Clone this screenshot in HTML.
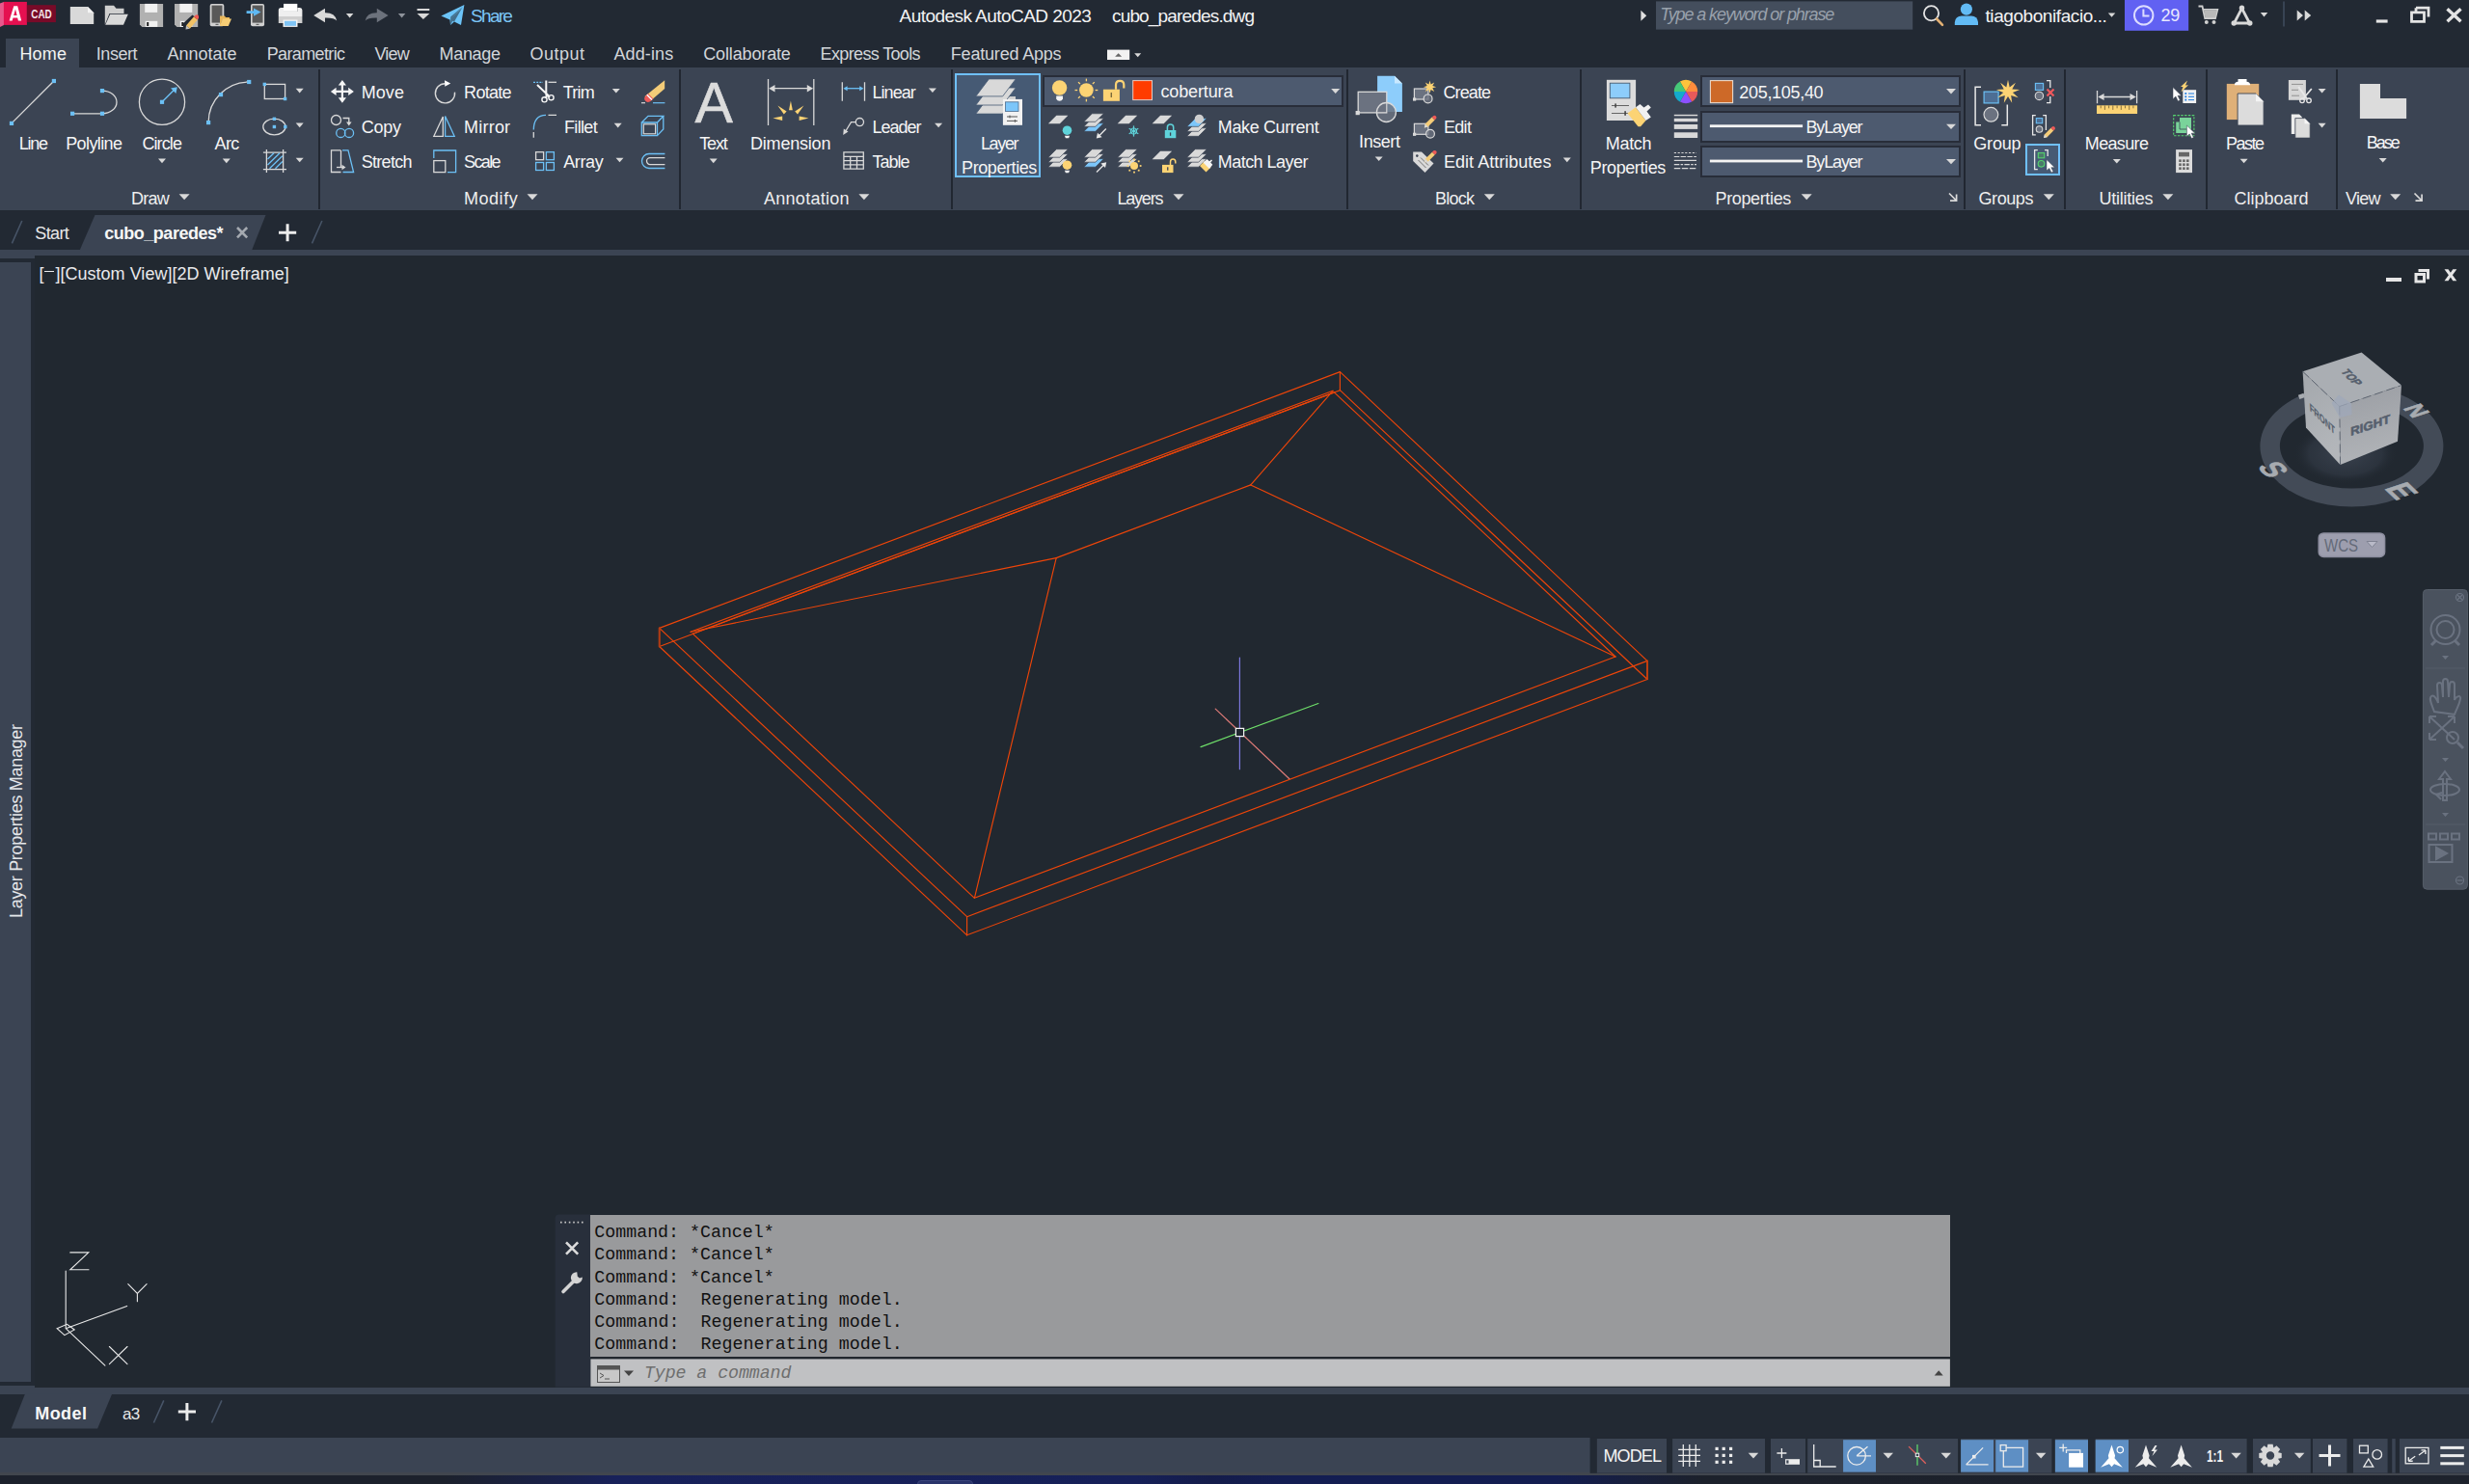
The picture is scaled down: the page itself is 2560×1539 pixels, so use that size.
<!DOCTYPE html>
<html><head><meta charset="utf-8"><title>Autodesk AutoCAD 2023 - cubo_paredes.dwg</title>
<style>
html,body{margin:0;padding:0;background:#222933;}
body{width:2560px;height:1539px;position:relative;overflow:hidden;font-family:"Liberation Sans",sans-serif;}
.b{position:absolute;box-sizing:border-box;}
.t{position:absolute;white-space:pre;line-height:1;}
.ov{position:absolute;left:0;top:0;pointer-events:none;}
</style></head><body>

<div id="app">
<div class="b" style="left:0.0px;top:0.0px;width:2560.0px;height:35.0px;background:#222933;"></div>
<div class="b" style="left:0.0px;top:35.0px;width:2560.0px;height:35.0px;background:#222933;"></div>
<div class="b" style="left:6.0px;top:40.0px;width:76.0px;height:30.0px;background:#3b4453;"></div>
<div class="b" style="left:0.0px;top:69.7px;width:2560.0px;height:148.3px;background:#3b4453;"></div>
<div class="b" style="left:0.0px;top:218.0px;width:2560.0px;height:41.0px;background:#222933;"></div>
<div class="b" style="left:0.0px;top:258.9px;width:2560.0px;height:6.0px;background:#3b4453;"></div>
<div class="b" style="left:36.0px;top:264.9px;width:2524.0px;height:1174.5px;background:#212830;"></div>
<div class="b" style="left:0.0px;top:264.9px;width:36.0px;height:1175.0px;background:#222933;"></div>
<div class="b" style="left:0.0px;top:258.9px;width:36.0px;height:9.1px;background:#3b4453;"></div>
<div class="b" style="left:0.0px;top:272.0px;width:32.4px;height:1160.5px;background:#3b4453;"></div>
<div class="b" style="left:0.0px;top:1436.8px;width:36.0px;height:9.0px;background:#3b4453;"></div>
<div class="b" style="left:0.0px;top:1439.4px;width:2560.0px;height:6.3px;background:#3b4453;"></div>
<div class="b" style="left:0.0px;top:1445.7px;width:2560.0px;height:45.0px;background:#222933;"></div>
<div class="b" style="left:0.0px;top:1490.6px;width:2560.0px;height:36.6px;background:#3b4453;"></div>
<div class="b" style="left:0.0px;top:1527.2px;width:2560.0px;height:2.4px;background:#41464e;"></div>
<div class="b" style="left:0.0px;top:1529.6px;width:2560.0px;height:9.4px;background:linear-gradient(90deg,#1c212c 0%,#1c212c 18%,#18215a 25%,#162058 46%,#141c4a 49%,#131d52 52%,#131d50 63%,#1c212b 69%,#1d222c 100%);"></div>
<div class="b" style="left:951.0px;top:1534.8px;width:58.0px;height:6.0px;background:#29336a;border:1px solid #3a447a;border-radius:4px 4px 0 0;"></div>
</div>
<svg class="ov" width="2560" height="1539" viewBox="0 0 2560 1539">
<path d="M0 3.5L4 1.9V25.9L0 27.9Z" fill="#e8588c"/>
<rect x="3.9" y="1.9" width="24" height="24" fill="#e51050"/>
<rect x="27.9" y="5.2" width="30" height="17.9" fill="#780a28"/>
<path d="M9.6 21.5L14.3 6.3H18.2L22.2 21.5H18.9L18.2 18.6H13.5L12.7 21.5ZM14.2 16H17.6L16 9.6Z" fill="#fff"/>
<text x="32.3" y="19" font-family="Liberation Sans" font-weight="bold" font-size="12.5" fill="#f4e6ea" textLength="21.5" lengthAdjust="spacingAndGlyphs">CAD</text>
<path d="M72.8 7.1H91L97.2 13.3V25H72.8Z" fill="#d9d9d9"/><path d="M91 7.1V13.3H97.2Z" fill="#f4f4f4"/>
<path d="M108.8 5.8H118L120.5 8.8H128.5V14H113.5L108.8 25.5Z" fill="#cfcfcf"/><path d="M114.2 14.8H132.8L128 25.7H109.2Z" fill="#d9d9d9"/>
<path d="M144.9 3.9H169.1V27.9H147.4L144.9 25.4Z" fill="#b1b1b1"/>
<rect x="150.20000000000002" y="3.9" width="13" height="9" fill="#f1f1f1"/>
<rect x="150.70000000000002" y="21.8" width="12.6" height="6.1" fill="#f1f1f1"/><rect x="152.20000000000002" y="23" width="2" height="4" fill="#222"/>
<path d="M181.0 3.9H205.2V27.9H183.5L181.0 25.4Z" fill="#b1b1b1"/>
<rect x="186.3" y="3.9" width="13" height="9" fill="#f1f1f1"/>
<rect x="186.8" y="21.8" width="12.6" height="6.1" fill="#f1f1f1"/><rect x="188.3" y="23" width="2" height="4" fill="#222"/>
<path d="M190 24L199.5 15.5L204.5 19.5L195 28.5H190Z" fill="#222933"/>
<path d="M193 26.5L201 17.2L204.8 20.4L196.8 29.7Z" fill="#f2c266"/><path d="M201 17.2L203 15.6Q205 14.8 206 16.8L206 18.5L204.8 20.4Z" fill="#ee5a54"/><path d="M193 26.5L196.8 29.7L192.5 30.5Z" fill="#c0c0c0"/>
<rect x="217.7" y="3.9" width="14.6" height="23.3" rx="2" fill="#d0d0d0"/><rect x="219.5" y="5.6" width="11" height="18" fill="#595959"/><rect x="223.5" y="24.8" width="3" height="1.2" fill="#666"/>
<path d="M228 16.6H233L234 18H238V20H231L228 27Z" fill="#e9b75a"/><path d="M231 19.4H240L236.8 27H228Z" fill="#f7cd75"/>
<rect x="260" y="3.9" width="14.1" height="23.3" rx="2" fill="#d0d0d0"/><rect x="261.6" y="5.6" width="10.9" height="18" fill="#595959"/><rect x="265.5" y="24.8" width="3" height="1.2" fill="#666"/>
<path d="M255.6 11.2H263V8.4L270.5 12.5L263 16.8V14H255.6Z" fill="#5fb9f3"/>
<rect x="294" y="3.9" width="14.3" height="8" fill="#fff"/><path d="M288.8 10.5Q288.8 8 291.3 8H294V12H308.3V8H311Q313.4 8 313.4 10.5V17H288.8Z" fill="#efefef"/><rect x="288.8" y="17" width="24.6" height="7" fill="#cfcfcf"/><rect x="293.5" y="20.5" width="15" height="7.4" fill="#f4f4f4"/><rect x="295" y="21.8" width="12" height="5" fill="#7fc4f5"/>
<path d="M325.2 16L337 8.8V13.2Q347.5 13 349.2 21.5Q346.5 18.3 337 18.6V23.3Z" fill="#d9d9d9"/>
<path d="M402.6 16L390.8 8.8V13.2Q380.3 13 378.7 21.5Q381.5 18.3 390.8 18.6V23.3Z" fill="#6c727c"/>
<path d="M358.9 14.0h7.5l-3.8 4.4z" fill="#d9d9d9"/>
<path d="M412.9 14.0h7.5l-3.8 4.4z" fill="#8e939b"/>
<rect x="432.5" y="9" width="12.8" height="2" fill="#d9d9d9"/>
<path d="M432.5 14.0h12.8l-6.4 6z" fill="#d9d9d9"/>
<path d="M457.4 16.4L481.4 4.9L478 25.9L471 22.5L467 26L466.5 20.5Z" fill="#6cc4f8"/><path d="M466.5 20.5L480.5 6.2L467.2 17.6L467 26L469.3 21.8L471 22.5L479.2 8Z" fill="#222933" opacity="0.55"/>
<path d="M1701.4 10.8L1707.2 16.3L1701.4 21.8Z" fill="#e0e0e0"/>
<rect x="1717" y="1.4" width="266.2" height="29.2" fill="#444e5d"/>
<circle cx="2002.5" cy="13.8" r="7.6" fill="none" stroke="#e4e4e4" stroke-width="1.8"/><path d="M2008 19.5L2014 25.8" stroke="#e2b074" stroke-width="2.6" stroke-linecap="round"/>
<circle cx="2038.9" cy="9.6" r="6.1" fill="#62bbf5"/><path d="M2026.8 26V23Q2027.5 16.5 2034 16.5H2044Q2050.3 16.5 2051 23V26Z" fill="#62bbf5"/>
<path d="M2185.8 13.4h7.5l-3.8 4.4z" fill="#d9d9d9"/>
<rect x="2203" y="0" width="66.2" height="31.8" fill="#6161f2"/>
<circle cx="2222.7" cy="15.9" r="9.7" fill="none" stroke="#dcdcff" stroke-width="2"/><path d="M2222.4 9.5V16.6H2228.5" stroke="#dcdcff" stroke-width="2" fill="none"/>
<path d="M2279.5 6.5H2283.5L2286.2 19H2297L2299.3 9.8H2285" stroke="#cfcfcf" stroke-width="1.8" fill="none"/><path d="M2285 10.5H2298.8L2297 18.3H2286.6Z" fill="#b9b9b9"/><circle cx="2287.8" cy="23" r="2" fill="#cfcfcf"/><circle cx="2295.5" cy="23" r="2" fill="#cfcfcf"/>
<path d="M2324.5 8.6L2316.5 24H2332.5Z" fill="none" stroke="#d9d9d9" stroke-width="2.8" stroke-linejoin="round"/><circle cx="2324.5" cy="8.3" r="2.7" fill="#d9d9d9"/><circle cx="2316.2" cy="24" r="2.7" fill="#d9d9d9"/><circle cx="2332.8" cy="24" r="2.7" fill="#d9d9d9"/>
<path d="M2343.8 13.0h7.5l-3.8 4.4z" fill="#d9d9d9"/>
<rect x="2367.2" y="1.5" width="1.6" height="26" fill="#3f4a5c"/>
<path d="M2381.7 10.5L2388 16L2381.7 21.5ZM2389.7 10.5L2396.2 16L2389.7 21.5Z" fill="#d9d9d9"/>
<rect x="2463.8" y="20.4" width="11.8" height="3.2" fill="#e4e4e4"/>
<path d="M2505 8.2H2518V17.5M2500.5 12.8H2513.5V22.4H2500.5Z" fill="none" stroke="#e4e4e4" stroke-width="2.8"/><path d="M2505 8.2V12" stroke="#e4e4e4" stroke-width="2.8"/>
<path d="M2537.5 9.2L2551.5 22.2M2551.5 9.2L2537.5 22.2" stroke="#e4e4e4" stroke-width="3.4"/>
</svg>
<span class="t" style="left:488.1px;top:7.0px;font-size:19px;color:#7cc6f6;letter-spacing:-1.725px;">Share</span>
<span class="t" style="left:932.5px;top:6.6px;font-size:19px;color:#f3f3f3;letter-spacing:-0.545px;">Autodesk AutoCAD 2023</span>
<span class="t" style="left:1153.0px;top:6.6px;font-size:19px;color:#f3f3f3;letter-spacing:-0.837px;">cubo_paredes.dwg</span>
<span class="t" style="left:1721.2px;top:6.4px;font-size:18px;color:#99a1ac;letter-spacing:-1.112px;font-style:italic;">Type a keyword or phrase</span>
<span class="t" style="left:2058.5px;top:6.7px;font-size:19px;color:#f3f3f3;letter-spacing:-0.424px;">tiagobonifacio...</span>
<span class="t" style="left:2240.6px;top:7.4px;font-size:18px;color:#e8e8ff;letter-spacing:-0.423px;">29</span>
<span class="t" style="left:20.4px;top:46.7px;font-size:18px;color:#f4f4f4;letter-spacing:0.161px;">Home</span>
<span class="t" style="left:99.8px;top:46.7px;font-size:18px;color:#d3d6da;letter-spacing:-0.444px;">Insert</span>
<span class="t" style="left:173.5px;top:46.7px;font-size:18px;color:#d3d6da;letter-spacing:-0.010px;">Annotate</span>
<span class="t" style="left:276.7px;top:46.7px;font-size:18px;color:#d3d6da;letter-spacing:-0.625px;">Parametric</span>
<span class="t" style="left:388.4px;top:46.7px;font-size:18px;color:#d3d6da;letter-spacing:-0.798px;">View</span>
<span class="t" style="left:455.6px;top:46.7px;font-size:18px;color:#d3d6da;letter-spacing:-0.351px;">Manage</span>
<span class="t" style="left:549.5px;top:46.7px;font-size:18px;color:#d3d6da;letter-spacing:0.472px;">Output</span>
<span class="t" style="left:636.5px;top:46.7px;font-size:18px;color:#d3d6da;letter-spacing:0.111px;">Add-ins</span>
<span class="t" style="left:729.2px;top:46.7px;font-size:18px;color:#d3d6da;letter-spacing:-0.137px;">Collaborate</span>
<span class="t" style="left:850.6px;top:46.7px;font-size:18px;color:#d3d6da;letter-spacing:-0.644px;">Express Tools</span>
<span class="t" style="left:985.8px;top:46.7px;font-size:18px;color:#d3d6da;letter-spacing:-0.191px;">Featured Apps</span>
<span class="t" style="left:136.0px;top:196.8px;font-size:18px;color:#eeeeee;letter-spacing:-0.735px;">Draw</span>
<span class="t" style="left:481.0px;top:196.8px;font-size:18px;color:#eeeeee;letter-spacing:0.536px;">Modify</span>
<span class="t" style="left:792.0px;top:196.8px;font-size:18px;color:#eeeeee;letter-spacing:0.280px;">Annotation</span>
<span class="t" style="left:1158.5px;top:196.8px;font-size:18px;color:#eeeeee;letter-spacing:-1.226px;">Layers</span>
<span class="t" style="left:1487.9px;top:196.8px;font-size:18px;color:#eeeeee;letter-spacing:-0.729px;">Block</span>
<span class="t" style="left:1778.5px;top:196.8px;font-size:18px;color:#eeeeee;letter-spacing:-0.360px;">Properties</span>
<span class="t" style="left:2051.5px;top:196.8px;font-size:18px;color:#eeeeee;letter-spacing:-0.426px;">Groups</span>
<span class="t" style="left:2176.5px;top:196.8px;font-size:18px;color:#eeeeee;letter-spacing:-0.252px;">Utilities</span>
<span class="t" style="left:2316.4px;top:196.8px;font-size:18px;color:#eeeeee;letter-spacing:0.006px;">Clipboard</span>
<span class="t" style="left:2432.0px;top:196.8px;font-size:18px;color:#eeeeee;letter-spacing:-0.764px;">View</span>
<svg class="ov" width="2560" height="1539" viewBox="0 0 2560 1539">
<path d="M185.6 201.2h11l-5.5 6z" fill="#d9d9d9"/>
<path d="M546.5 201.2h11l-5.5 6z" fill="#d9d9d9"/>
<path d="M890.4 201.2h11l-5.5 6z" fill="#d9d9d9"/>
<path d="M1216.5 201.2h11l-5.5 6z" fill="#d9d9d9"/>
<path d="M1538.8 201.2h11l-5.5 6z" fill="#d9d9d9"/>
<path d="M1867.7 201.2h11l-5.5 6z" fill="#d9d9d9"/>
<path d="M2118.8 201.2h11l-5.5 6z" fill="#d9d9d9"/>
<path d="M2242.4 201.2h11l-5.5 6z" fill="#d9d9d9"/>
<path d="M2478.2 201.2h11l-5.5 6z" fill="#d9d9d9"/>
<path d="M2021 200.5L2028 207.5M2028.6 201.5V208.2H2022" stroke="#d9d9d9" stroke-width="1.7" fill="none"/>
<path d="M2503.5 200.5L2510.5 207.5M2511.1 201.5V208.2H2504.5" stroke="#d9d9d9" stroke-width="1.7" fill="none"/>
<rect x="330" y="72" width="2" height="145" fill="#212731"/>
<rect x="704" y="72" width="2" height="145" fill="#212731"/>
<rect x="986" y="72" width="2" height="145" fill="#212731"/>
<rect x="1396" y="72" width="2" height="145" fill="#212731"/>
<rect x="1638" y="72" width="2" height="145" fill="#212731"/>
<rect x="2036" y="72" width="2" height="145" fill="#212731"/>
<rect x="2140" y="72" width="2" height="145" fill="#212731"/>
<rect x="2287" y="72" width="2" height="145" fill="#212731"/>
<rect x="2422" y="72" width="2" height="145" fill="#212731"/>
<rect x="1148" y="51.6" width="23.2" height="10.4" fill="#f2f2f2"/>
<path d="M1156.1 58.8h7l-3.5-3.6z" fill="#666"/>
<path d="M1176.2 55.3h7l-3.5 4z" fill="#d9d9d9"/>
<g stroke="#d9d9d9" stroke-width="1.3" fill="none">
<path d="M12 127.9L55.9 84"/>
<path d="M75.1 117.8H106A15 11.85 0 0 0 106 94.1"/>
<circle cx="168" cy="105.8" r="23.6"/>
<path d="M216.1 127.1A42.1 42.1 0 0 1 258.2 85"/>
<rect x="274.3" y="87.4" width="21.3" height="15.1"/>
<ellipse cx="284.4" cy="131.5" rx="11.6" ry="8.3"/>
<path d="M276.4 155.1V178.9M293.6 155.1V178.9M272.9 158.2H297M272.9 175.6H297"/>
</g>
<path d="M168 105.8L181 92.8" stroke="#6cc0f5" stroke-width="1.4"/><path d="M183.8 90.2L177 91.6L182.4 97Z" fill="#6cc0f5"/>
<path d="M277.5 165L284 158.8M277.5 171L290 158.8M279.5 174.8L292.8 161.8M285.5 174.8L292.8 167.5" stroke="#6cc0f5" stroke-width="1.3"/>
<rect x="9.9" y="125.8" width="4.2" height="4.2" fill="#6cc0f5"/>
<rect x="53.8" y="81.9" width="4.2" height="4.2" fill="#6cc0f5"/>
<rect x="73.0" y="115.7" width="4.2" height="4.2" fill="#6cc0f5"/>
<rect x="103.9" y="115.7" width="4.2" height="4.2" fill="#6cc0f5"/>
<rect x="103.9" y="92.0" width="4.2" height="4.2" fill="#6cc0f5"/>
<rect x="165.9" y="103.7" width="4.2" height="4.2" fill="#6cc0f5"/>
<rect x="214.0" y="125.0" width="4.2" height="4.2" fill="#6cc0f5"/>
<rect x="226.9" y="96.0" width="4.2" height="4.2" fill="#6cc0f5"/>
<rect x="256.1" y="82.9" width="4.2" height="4.2" fill="#6cc0f5"/>
<rect x="272.6" y="85.7" width="3.4" height="3.4" fill="#6cc0f5"/>
<rect x="293.9" y="100.8" width="3.4" height="3.4" fill="#6cc0f5"/>
<rect x="282.7" y="121.6" width="3.4" height="3.4" fill="#6cc0f5"/>
<rect x="282.7" y="129.8" width="3.4" height="3.4" fill="#6cc0f5"/>
<rect x="294.1" y="129.8" width="3.4" height="3.4" fill="#6cc0f5"/>
<path d="M306.7 91.8h8l-4.0 4.6z" fill="#d9d9d9"/>
<path d="M306.7 127.6h8l-4.0 4.6z" fill="#d9d9d9"/>
<path d="M306.7 163.7h8l-4.0 4.6z" fill="#d9d9d9"/>
<path d="M164.0 164.6h8l-4.0 4.6z" fill="#d9d9d9"/>
<path d="M230.8 164.6h8l-4.0 4.6z" fill="#d9d9d9"/>
<path d="M354.9 83L359 88.6H356V93.8H361.2V90.8L366.9 94.9L361.2 99V96H356V101.2H359L354.9 106.8L350.8 101.2H353.8V96H348.6V99L342.9 94.9L348.6 90.8V93.8H353.8V88.6H350.8Z" fill="#f6f6f6"/>
<circle cx="348.5" cy="124.5" r="5" fill="none" stroke="#d9d9d9" stroke-width="1.3"/><path d="M355.5 122.5H361.8V127" stroke="#d9d9d9" stroke-width="1.3" fill="none"/><path d="M359 126.5H364.6L361.8 130.5Z" fill="#d9d9d9"/>
<circle cx="353.3" cy="137.9" r="4.6" fill="none" stroke="#6cc0f5" stroke-width="1.3"/><circle cx="362" cy="137.9" r="4.6" fill="none" stroke="#6cc0f5" stroke-width="1.3"/>
<path d="M353.5 155.9H343.5V178.5H353.5M353.5 155.9V173" stroke="#d9d9d9" stroke-width="1.3" fill="none"/><path d="M349 173.5H355" stroke="#d9d9d9" stroke-width="1.3"/><path d="M354.5 170.8L358.5 173.5L354.5 176.2Z" fill="#d9d9d9"/><path d="M355 155.9H361L366.6 178.5H355.5" stroke="#6cc0f5" stroke-width="1.3" fill="none"/>
<path d="M461.4 86.7A10.1 10.1 0 1 0 471.5 95.6" stroke="#d9d9d9" stroke-width="1.4" fill="none"/><path d="M461 83.2L467.2 86.5L461.3 89.8Z" fill="#fff"/>
<path d="M459.3 121V141.3H449.8Z" stroke="#d9d9d9" stroke-width="1.3" fill="none"/><path d="M461.6 120.5V141.3H471.2Z" stroke="#6cc0f5" stroke-width="1.3" fill="none"/>
<path d="M449.8 164V156H472.6V178.6H464" stroke="#6cc0f5" stroke-width="1.3" fill="none"/><rect x="449.8" y="166.6" width="12" height="12" stroke="#d9d9d9" stroke-width="1.3" fill="none"/>
<path d="M553 85.3H563" stroke="#6cc0f5" stroke-width="1.3" stroke-dasharray="2 1.2"/><path d="M568.5 85.3H577" stroke="#d9d9d9" stroke-width="1.3"/>
<path d="M566.3 83.5V98L570 101M557 88L568 98.5L565 101.5" stroke="#f6f6f6" stroke-width="2" fill="none"/><circle cx="564.5" cy="103.3" r="2.6" stroke="#f6f6f6" stroke-width="1.4" fill="none"/><circle cx="571.5" cy="101.2" r="2.6" stroke="#f6f6f6" stroke-width="1.4" fill="none"/>
<path d="M553.3 134.5Q553.5 119.6 566 119.4" stroke="#6cc0f5" stroke-width="1.3" fill="none"/><path d="M568.5 119.4H577M553.3 137V142.7" stroke="#d9d9d9" stroke-width="1.3"/>
<rect x="555.6" y="157.7" width="8" height="8" stroke="#d9d9d9" stroke-width="1.3" fill="none"/>
<rect x="566.4" y="157.7" width="8" height="8" stroke="#6cc0f5" stroke-width="1.3" fill="none"/>
<rect x="555.6" y="168.5" width="8" height="8" stroke="#6cc0f5" stroke-width="1.3" fill="none"/>
<rect x="566.4" y="168.5" width="8" height="8" stroke="#6cc0f5" stroke-width="1.3" fill="none"/>
<path d="M689.2 83.2V92L674 105L668.5 100Z" fill="#f4cc78"/><path d="M672 97L677.5 102.5L674.5 105Q671 107 669 104.5Q667 102 669.5 99.5Z" fill="#ee5a58"/><path d="M670.8 98.3L676 103.6" stroke="#fff" stroke-width="1.4"/>
<path d="M665 106.7H669" stroke="#d9d9d9" stroke-width="1.2"/><path d="M677 106.7H689.4" stroke="#6cc0f5" stroke-width="1.2"/>
<path d="M665.3 127H681.5V140.6H665.3ZM665.3 127L672 120.3H687.8L681.5 127M687.8 120.3V134L681.5 140.6" stroke="#6cc0f5" stroke-width="1.3" fill="none"/><rect x="667.3" y="128.8" width="12.3" height="10" stroke="#d9d9d9" stroke-width="1.2" fill="none"/>
<path d="M689.4 159.5H673A7.5 7.5 0 0 0 673 174.5H689.4" stroke="#6cc0f5" stroke-width="1.3" fill="none"/><path d="M689.4 163.6H674A3.5 3.5 0 0 0 674 170.6H689.4" stroke="#d9d9d9" stroke-width="1.3" fill="none"/>
<path d="M634.8 91.9h8l-4.0 4.6z" fill="#d9d9d9"/>
<path d="M636.7 127.8h8l-4.0 4.6z" fill="#d9d9d9"/>
<path d="M638.5 163.7h8l-4.0 4.6z" fill="#d9d9d9"/>
<path d="M796.5 82V130M843.8 82V130M801 91.7H839" stroke="#d9d9d9" stroke-width="1.3" fill="none"/><path d="M797.2 91.7L803.5 88V95.4ZM843.1 91.7L836.8 88V95.4Z" fill="#d9d9d9"/>
<g fill="#fcd374"><path d="M819.9 104.6L821.8 114.2H818Z"/><path d="M806.4 109.6L815.6 115.6L812.8 118.4Z"/><path d="M833.4 109.6L824.2 115.6L827 118.4Z"/><path d="M801.4 122.6L811.2 120.4V124.9Z"/><path d="M838.4 122.6L828.6 120.4V124.9Z"/></g>
<path d="M873.3 85.2V104.7M896.5 85.2V104.7" stroke="#d9d9d9" stroke-width="1.3"/><path d="M877 91.7H893" stroke="#6cc0f5" stroke-width="1.3"/><path d="M874.4 91.7L878.6 89.2V94.2ZM895.4 91.7L891.2 89.2V94.2Z" fill="#6cc0f5"/>
<circle cx="891.4" cy="126.6" r="4.1" stroke="#d9d9d9" stroke-width="1.3" fill="none"/><path d="M887.2 126.6H882.5L876.5 136.5" stroke="#d9d9d9" stroke-width="1.3" fill="none"/><path d="M874.2 140L874.8 133.5L879.5 136.6Z" fill="#d9d9d9"/>
<path d="M874.9 157.9H895.3V175.2H874.9ZM874.9 162.3H895.3M874.9 166.6H895.3M874.9 170.9H895.3M881.7 162.3V175.2M888.5 162.3V175.2" stroke="#d9d9d9" stroke-width="1.3" fill="none"/>
<path d="M735.7 164.6h8l-4.0 4.6z" fill="#d9d9d9"/>
<path d="M962.9 91.4h8l-4.0 4.6z" fill="#d9d9d9"/>
<path d="M969.1 127.7h8l-4.0 4.6z" fill="#d9d9d9"/>
</svg>
<span class="t" style="left:19.8px;top:139.7px;font-size:18px;color:#f5f5f5;letter-spacing:-1.245px;">Line</span>
<span class="t" style="left:68.2px;top:139.7px;font-size:18px;color:#f5f5f5;letter-spacing:-0.606px;">Polyline</span>
<span class="t" style="left:147.4px;top:139.7px;font-size:18px;color:#f5f5f5;letter-spacing:-0.901px;">Circle</span>
<span class="t" style="left:222.5px;top:139.7px;font-size:18px;color:#f5f5f5;letter-spacing:-0.600px;">Arc</span>
<span class="t" style="left:374.7px;top:86.8px;font-size:18px;color:#f5f5f5;letter-spacing:0.061px;">Move</span>
<span class="t" style="left:374.7px;top:122.8px;font-size:18px;color:#f5f5f5;letter-spacing:-0.274px;">Copy</span>
<span class="t" style="left:374.7px;top:158.8px;font-size:18px;color:#f5f5f5;letter-spacing:-0.705px;">Stretch</span>
<span class="t" style="left:481.1px;top:86.8px;font-size:18px;color:#f5f5f5;letter-spacing:-0.708px;">Rotate</span>
<span class="t" style="left:481.1px;top:122.8px;font-size:18px;color:#f5f5f5;letter-spacing:0.202px;">Mirror</span>
<span class="t" style="left:481.1px;top:158.8px;font-size:18px;color:#f5f5f5;letter-spacing:-1.632px;">Scale</span>
<span class="t" style="left:583.8px;top:86.8px;font-size:18px;color:#f5f5f5;letter-spacing:-0.805px;">Trim</span>
<span class="t" style="left:585.0px;top:122.8px;font-size:18px;color:#f5f5f5;letter-spacing:-0.662px;">Fillet</span>
<span class="t" style="left:584.2px;top:158.8px;font-size:18px;color:#f5f5f5;letter-spacing:-0.376px;">Array</span>
<span class="t" style="left:720.6px;top:77.6px;font-size:59px;color:#dcdcdc;-webkit-text-stroke:0.6px #dcdcdc;">A</span>
<span class="t" style="left:725.3px;top:139.8px;font-size:18px;color:#f5f5f5;letter-spacing:-1.172px;">Text</span>
<span class="t" style="left:778.0px;top:139.8px;font-size:18px;color:#f5f5f5;letter-spacing:-0.205px;">Dimension</span>
<span class="t" style="left:904.5px;top:86.8px;font-size:18px;color:#f5f5f5;letter-spacing:-0.948px;">Linear</span>
<span class="t" style="left:904.5px;top:122.8px;font-size:18px;color:#f5f5f5;letter-spacing:-1.011px;">Leader</span>
<span class="t" style="left:904.5px;top:158.8px;font-size:18px;color:#f5f5f5;letter-spacing:-0.984px;">Table</span>
<div class="b" style="left:990.0px;top:76.0px;width:89.2px;height:108.0px;background:#465a74;border:2px solid #6fc0fb;"></div>
<div class="b" style="left:1081.0px;top:78.0px;width:312.0px;height:32.6px;background:#4d5a6f;border:2px solid #282d39;"></div>
<div class="b" style="left:1763.0px;top:78.0px;width:270.0px;height:33.4px;background:#4d5a6f;border:2px solid #282d39;"></div>
<div class="b" style="left:1763.0px;top:115.0px;width:270.0px;height:33.3px;background:#4d5a6f;border:2px solid #282d39;"></div>
<div class="b" style="left:1763.0px;top:151.0px;width:270.0px;height:33.0px;background:#4d5a6f;border:2px solid #282d39;"></div>
<div class="b" style="left:2100.0px;top:149.0px;width:36.0px;height:33.0px;background:#465a74;border:2px solid #6fc0fb;"></div>
<svg class="ov" width="2560" height="1539" viewBox="0 0 2560 1539">
<path d="M1025.4 100.1H1053.2L1039.6 118.1H1011.8Z" fill="#d9d9d9" stroke="#465a74" stroke-width="0.8"/>
<path d="M1025.4 91H1053.2L1039.6 109H1011.8Z" fill="#d9d9d9" stroke="#465a74" stroke-width="0.8"/>
<path d="M1025.4 81.9H1053.2L1039.6 99.9H1011.8Z" fill="#d9d9d9" stroke="#465a74" stroke-width="0.8"/>
<rect x="1047" y="100" width="6" height="3" fill="#cfcfcf"/>
<rect x="1039.9" y="102.9" width="20.1" height="26.9" fill="#f2f2f2"/><rect x="1042.4" y="105.8" width="13.6" height="9.6" fill="#7cc6fa" stroke="#4d6c8c" stroke-width="0.8"/>
<path d="M1044 121H1055M1044 125.4H1055M1047 119.6V122.4M1052.4 124V126.8" stroke="#555" stroke-width="1"/>
<circle cx="1098.6" cy="91" r="7.7" fill="#fcd374"/><path d="M1095.2 99.5H1102V102.5Q1101 104.8 1098.6 104.8Q1096.2 104.8 1095.2 102.5Z" fill="#f4f4f4"/>
<circle cx="1126.4" cy="93.5" r="7.3" fill="#fcd374"/>
<path d="M1135.6 93.5L1138.3 93.5" stroke="#fcd374" stroke-width="1.3"/>
<path d="M1132.9 100.0L1134.8 101.9" stroke="#fcd374" stroke-width="1.3"/>
<path d="M1126.4 102.7L1126.4 105.4" stroke="#fcd374" stroke-width="1.3"/>
<path d="M1119.9 100.0L1118.0 101.9" stroke="#fcd374" stroke-width="1.3"/>
<path d="M1117.2 93.5L1114.5 93.5" stroke="#fcd374" stroke-width="1.3"/>
<path d="M1119.9 87.0L1118.0 85.1" stroke="#fcd374" stroke-width="1.3"/>
<path d="M1126.4 84.3L1126.4 81.6" stroke="#fcd374" stroke-width="1.3"/>
<path d="M1132.9 87.0L1134.8 85.1" stroke="#fcd374" stroke-width="1.3"/>
<rect x="1143.9" y="92.7" width="17" height="12.1" fill="#fcd374"/><path d="M1157 92.7V88Q1157 83.8 1161.2 83.8Q1165.3 83.8 1165.3 88V91.5" stroke="#fcd374" stroke-width="2.2" fill="none"/><rect x="1151.6" y="96" width="1.4" height="5" fill="#7a6a3a"/>
<rect x="1174.7" y="83.6" width="19.8" height="20" fill="#ff3c00" stroke="#e6c9c0" stroke-width="1"/>
<path d="M1380.2 92.1h9l-4.5 5z" fill="#d9d9d9"/>
<path d="M1095.4 119.8H1107.4L1098.9 128.3H1086.9Z" fill="#d9d9d9"/>
<circle cx="1106.5" cy="135.2" r="4.8" fill="#5fd3da"/><path d="M1103.9 140.79999999999998H1109.1L1108.1 143.2H1104.9Z" fill="#f4f4f4"/>
<path d="M1132.4 127.8H1144.4L1135.9 136.3H1123.9Z" fill="#7cc6fa" stroke="#3b4453" stroke-width="0.7"/>
<path d="M1132.4 122.8H1144.4L1135.9 131.3H1123.9Z" fill="#d9d9d9" stroke="#3b4453" stroke-width="0.7"/>
<path d="M1132.4 117.8H1144.4L1135.9 126.3H1123.9Z" fill="#d9d9d9" stroke="#3b4453" stroke-width="0.7"/>
<path d="M1146.8 133.5L1139 141.5" stroke="#e8e8e8" stroke-width="1.3"/><path d="M1136.8 143.5L1138 137.8L1142.6 142.3Z" fill="#e8e8e8"/>
<path d="M1167.2 119.8H1179.2L1170.7 128.3H1158.7Z" fill="#d9d9d9"/>
<path d="M1180.3 138.8L1170.7 133.2" stroke="#5fd3da" stroke-width="1.2"/>
<path d="M1175.5 141.6L1175.5 130.4" stroke="#5fd3da" stroke-width="1.2"/>
<path d="M1170.7 138.8L1180.3 133.2" stroke="#5fd3da" stroke-width="1.2"/>
<circle cx="1175.5" cy="136" r="3.2" stroke="#5fd3da" stroke-width="1" fill="none"/>
<path d="M1203.1 119.8H1215.1L1206.6 128.3H1194.6Z" fill="#d9d9d9"/>
<rect x="1207.8" y="135" width="11.5" height="8.2" fill="#5fd3da"/><rect x="1212.8999999999999" y="137.4" width="1.3" height="3.4" fill="#3b4453"/>
<path d="M1210.3999999999999 135V132Q1210.3999999999999 129 1213.55 129Q1216.7 129 1216.7 132V135" stroke="#5fd3da" stroke-width="1.5" fill="none"/>
<path d="M1239.2 132.8H1251.2L1242.7 141.3H1230.7Z" fill="#d9d9d9" stroke="#3b4453" stroke-width="0.7"/>
<path d="M1239.2 127.8H1251.2L1242.7 136.3H1230.7Z" fill="#d9d9d9" stroke="#3b4453" stroke-width="0.7"/>
<path d="M1239.2 122.8H1251.2L1242.7 131.3H1230.7Z" fill="#7cc6fa" stroke="#3b4453" stroke-width="0.7"/>
<circle cx="1243.4" cy="123.4" r="4.7" fill="#cfcfcf"/>
<path d="M1095.4 164.7H1107.4L1098.9 173.2H1086.9Z" fill="#d9d9d9" stroke="#3b4453" stroke-width="0.7"/>
<path d="M1095.4 159.7H1107.4L1098.9 168.2H1086.9Z" fill="#d9d9d9" stroke="#3b4453" stroke-width="0.7"/>
<path d="M1095.4 154.7H1107.4L1098.9 163.2H1086.9Z" fill="#d9d9d9" stroke="#3b4453" stroke-width="0.7"/>
<circle cx="1106.5" cy="171.2" r="4.8" fill="#fcd374"/><path d="M1103.9 176.79999999999998H1109.1L1108.1 179.2H1104.9Z" fill="#f4f4f4"/>
<path d="M1132.4 164.7H1144.4L1135.9 173.2H1123.9Z" fill="#7cc6fa" stroke="#3b4453" stroke-width="0.7"/>
<path d="M1132.4 159.7H1144.4L1135.9 168.2H1123.9Z" fill="#d9d9d9" stroke="#3b4453" stroke-width="0.7"/>
<path d="M1132.4 154.7H1144.4L1135.9 163.2H1123.9Z" fill="#d9d9d9" stroke="#3b4453" stroke-width="0.7"/>
<path d="M1137 178.5L1145 170.5" stroke="#e8e8e8" stroke-width="1.3"/><path d="M1147.2 168.3L1146 174L1141.4 169.5Z" fill="#e8e8e8"/>
<path d="M1167.2 164.7H1179.2L1170.7 173.2H1158.7Z" fill="#d9d9d9" stroke="#3b4453" stroke-width="0.7"/>
<path d="M1167.2 159.7H1179.2L1170.7 168.2H1158.7Z" fill="#d9d9d9" stroke="#3b4453" stroke-width="0.7"/>
<path d="M1167.2 154.7H1179.2L1170.7 163.2H1158.7Z" fill="#d9d9d9" stroke="#3b4453" stroke-width="0.7"/>
<circle cx="1176" cy="172" r="4" fill="#fcd374"/>
<rect x="1181.7" y="171.1" width="1.8" height="1.8" fill="#fcd374"/>
<rect x="1179.8" y="175.8" width="1.8" height="1.8" fill="#fcd374"/>
<rect x="1175.1" y="177.7" width="1.8" height="1.8" fill="#fcd374"/>
<rect x="1170.4" y="175.8" width="1.8" height="1.8" fill="#fcd374"/>
<rect x="1168.5" y="171.1" width="1.8" height="1.8" fill="#fcd374"/>
<rect x="1170.4" y="166.4" width="1.8" height="1.8" fill="#fcd374"/>
<rect x="1175.1" y="164.5" width="1.8" height="1.8" fill="#fcd374"/>
<rect x="1179.8" y="166.4" width="1.8" height="1.8" fill="#fcd374"/>
<path d="M1203.1 156.7H1215.1L1206.6 165.2H1194.6Z" fill="#d9d9d9"/>
<rect x="1205" y="170.9" width="11.5" height="8.2" fill="#fcd374"/><rect x="1210.1" y="173.3" width="1.3" height="3.4" fill="#3b4453"/>
<path d="M1213.5 170.9V167.9Q1213.5 164.9 1216.2 164.9Q1218.8 164.9 1218.8 167.9V169.4" stroke="#fcd374" stroke-width="1.5" fill="none"/>
<path d="M1239.2 164.7H1251.2L1242.7 173.2H1230.7Z" fill="#d9d9d9" stroke="#3b4453" stroke-width="0.7"/>
<path d="M1239.2 159.7H1251.2L1242.7 168.2H1230.7Z" fill="#d9d9d9" stroke="#3b4453" stroke-width="0.7"/>
<path d="M1239.2 154.7H1251.2L1242.7 163.2H1230.7Z" fill="#d9d9d9" stroke="#3b4453" stroke-width="0.7"/>
<path d="M1244 172L1249 167L1255.5 173.5L1250.5 178.5Z" fill="#fcd374"/><path d="M1247.5 168.5L1251.5 165L1254 167.3L1256 165.5L1257 166.5L1255.2 168.5L1257.3 170.8L1254 175Z" fill="#f4f4f4"/>
<path d="M1428.1 78.8H1446L1453.9 86.5V116H1428.1Z" fill="#8dcdfb"/><path d="M1446 78.8V86.5H1453.9Z" fill="#c8e8ff"/>
<rect x="1408.2" y="95.3" width="29.6" height="21.6" fill="#6b7280" stroke="#d9d9d9" stroke-width="1.3"/><circle cx="1437.4" cy="116.5" r="10" fill="#6b7280" fill-opacity="0.85" stroke="#d9d9d9" stroke-width="1.3"/><path d="M1427.4 116.9H1437.8V106.5" stroke="#d9d9d9" stroke-width="1.1" fill="none"/><rect x="1405.6" y="115" width="4.2" height="4.2" fill="#d9d9d9"/>
<rect x="1466.4" y="92.0" width="14.5" height="11" fill="#6b7280" stroke="#d9d9d9" stroke-width="1.2"/><rect x="1465" y="101.39999999999999" width="3.2" height="3.2" fill="#d9d9d9"/>
<circle cx="1480.6" cy="102.39999999999999" r="4.4" fill="#6b7280" fill-opacity="0.8" stroke="#d9d9d9" stroke-width="1.2"/>
<path d="M1482.5 83.6L1483.6 87.4L1487.2 85.5L1485.3 89.1L1489.1 90.2L1485.3 91.3L1487.2 94.9L1483.6 93.0L1482.5 96.8L1481.4 93.0L1477.8 94.9L1479.7 91.3L1475.9 90.2L1479.7 89.1L1477.8 85.5L1481.4 87.4Z" fill="#fcd374"/>
<rect x="1466.4" y="128.3" width="14.5" height="11" fill="#6b7280" stroke="#d9d9d9" stroke-width="1.2"/><rect x="1465" y="137.70000000000002" width="3.2" height="3.2" fill="#d9d9d9"/>
<circle cx="1483" cy="138.70000000000002" r="4.4" fill="#6b7280" fill-opacity="0.8" stroke="#d9d9d9" stroke-width="1.2"/>
<g transform="translate(1476.8 132.4) scale(0.9)"><path d="M0 0L1 -4.2L8.8 -12L12 -8.8L4.2 -1Z" fill="#f4cc78"/><path d="M8.8 -12L10.4 -13.6Q12 -14.6 13.4 -13.2Q14.8 -11.8 13.6 -10.4L12 -8.8Z" fill="#ee5a58"/><path d="M0 0L1 -4.2L4.2 -1Z" fill="#d8d8d8"/></g>
<path d="M1465.2 157.5H1474L1486.5 169.5L1477.5 179L1465.2 167Z" fill="#d9d9d9"/><circle cx="1469.3" cy="161.6" r="1.3" fill="#3b4453"/><path d="M1470.5 166L1478.5 174M1473 163.5L1481 171.5" stroke="#555" stroke-width="0.8"/>
<g transform="translate(1477 168.5) scale(0.9)"><path d="M0 0L1 -4.2L8.8 -12L12 -8.8L4.2 -1Z" fill="#f4cc78"/><path d="M8.8 -12L10.4 -13.6Q12 -14.6 13.4 -13.2Q14.8 -11.8 13.6 -10.4L12 -8.8Z" fill="#ee5a58"/><path d="M0 0L1 -4.2L4.2 -1Z" fill="#d8d8d8"/></g>
<path d="M1425.7 162.4h8l-4.0 4.6z" fill="#d9d9d9"/>
<path d="M1620.8 163.6h8l-4.0 4.6z" fill="#d9d9d9"/>
<rect x="1665.9" y="82.8" width="30.2" height="42.2" fill="#dcdcdc"/><rect x="1669.3" y="86.2" width="20.6" height="15.6" fill="#8dcdfb" stroke="#445a70" stroke-width="0.9"/>
<path d="M1671 109.5H1689M1671 117.5H1689" stroke="#555" stroke-width="0.9"/><rect x="1674.3" y="107.4" width="1.6" height="4.2" fill="#444"/><rect x="1684.3" y="115.2" width="1.6" height="4.6" fill="#444"/>
<path d="M1687.5 117.5L1696 111.3L1706.5 125L1701 131.3H1698.5Z" fill="#fcd374"/><path d="M1696 111.3L1700.5 108L1704.5 111.5L1709 108.5L1711.8 111.5L1707.5 115.5L1711.8 121.5L1706.5 125Z" fill="#f1f1f1"/>
<path d="M1748 95L1741.90 84.43A12.2 12.2 0 0 1 1754.10 84.43Z" fill="#ffc33c"/>
<path d="M1748 95L1754.10 84.43A12.2 12.2 0 0 1 1760.20 95.00Z" fill="#ff8c3c"/>
<path d="M1748 95L1760.20 95.00A12.2 12.2 0 0 1 1754.10 105.57Z" fill="#e85a5a"/>
<path d="M1748 95L1754.10 105.57A12.2 12.2 0 0 1 1741.90 105.57Z" fill="#8c50ff"/>
<path d="M1748 95L1741.90 105.57A12.2 12.2 0 0 1 1735.80 95.00Z" fill="#14aacd"/>
<path d="M1748 95L1735.80 95.00A12.2 12.2 0 0 1 1741.90 84.43Z" fill="#46c878"/>
<rect x="1773.4" y="83.6" width="23.2" height="23" fill="#cd6928" stroke="#ead9c9" stroke-width="1.1"/>
<rect x="1735.8" y="118.8" width="24.4" height="1.5" fill="#d9d9d9"/><rect x="1735.8" y="122.8" width="24.4" height="3.4" fill="#d9d9d9"/><rect x="1735.8" y="129" width="24.4" height="4.9" fill="#d9d9d9"/><rect x="1735.8" y="137.3" width="24.4" height="5.7" fill="#d9d9d9"/>
<path d="M1735.8 158.5H1759" stroke="#d9d9d9" stroke-width="1.2" stroke-dasharray="2.2 1.6"/><path d="M1735.8 162.5H1759" stroke="#d9d9d9" stroke-width="1.2" stroke-dasharray="5.5 1.3"/><path d="M1735.8 166.4H1759" stroke="#d9d9d9" stroke-width="1.2"/><path d="M1735.8 170.6H1759" stroke="#d9d9d9" stroke-width="1.2" stroke-dasharray="5.5 1.3 2.5 1.3"/><path d="M1735.8 174.6H1759" stroke="#d9d9d9" stroke-width="1.2" stroke-dasharray="6.5 1.5"/>
<rect x="1772.9" y="129.3" width="96.2" height="2.8" fill="#f4f4f4"/><rect x="1772.9" y="165.6" width="96.2" height="2.8" fill="#f4f4f4"/>
<path d="M2018.0 92.1h10l-5.0 5.4z" fill="#d9d9d9"/>
<path d="M2018.0 128.7h10l-5.0 5.4z" fill="#d9d9d9"/>
<path d="M2018.0 164.9h10l-5.0 5.4z" fill="#d9d9d9"/>
<path d="M2054 90.3H2048.1V129.8H2054M2075.3 129.8H2081.3V108.5" stroke="#e8e8e8" stroke-width="1.5" fill="none"/>
<rect x="2057.1" y="95.1" width="15" height="11.8" fill="#4d6e94" stroke="#6cc0f5" stroke-width="1.2"/><circle cx="2064.4" cy="118.8" r="7.4" fill="#6b7280" stroke="#d9d9d9" stroke-width="1.2"/>
<path d="M2082.0 82.8L2083.7 90.4L2089.9 85.7L2086.3 92.6L2094.1 93.0L2086.9 96.0L2092.7 101.2L2085.2 98.9L2086.2 106.7L2082.0 100.1L2077.8 106.7L2078.8 98.9L2071.3 101.2L2077.1 96.0L2069.9 93.0L2077.7 92.6L2074.1 85.7L2080.3 90.4Z" fill="#fcd374"/>
<rect x="2110.4" y="86.4" width="8.2" height="7" fill="#4d6e94" stroke="#6cc0f5" stroke-width="1.1"/><circle cx="2114.4" cy="99.4" r="4.2" fill="#6b7280" stroke="#d9d9d9" stroke-width="1.1"/><path d="M2122 83.6H2125.8V91M2125.8 100V106.6H2122" stroke="#e8e8e8" stroke-width="1.3" fill="none"/><path d="M2122.5 92.5L2129.5 99.5M2129.5 92.5L2122.5 99.5" stroke="#f0585c" stroke-width="2.2"/>
<path d="M2110.8 119.6H2107.6V139.8H2110.8M2118.2 119.6H2121.4V135" stroke="#e8e8e8" stroke-width="1.3" fill="none"/><rect x="2111.3" y="122.6" width="6.4" height="5.2" fill="#4d6e94" stroke="#6cc0f5" stroke-width="1.1"/><circle cx="2114.5" cy="134" r="3.3" fill="#6b7280" stroke="#d9d9d9" stroke-width="1.1"/>
<g transform="translate(2119 143) scale(0.85)"><path d="M0 0L1 -4.2L8.8 -12L12 -8.8L4.2 -1Z" fill="#f4cc78"/><path d="M8.8 -12L10.4 -13.6Q12 -14.6 13.4 -13.2Q14.8 -11.8 13.6 -10.4L12 -8.8Z" fill="#ee5a58"/><path d="M0 0L1 -4.2L4.2 -1Z" fill="#d8d8d8"/></g>
<path d="M2112.8 155.6H2109.6V175.6H2112.8M2120 155.6H2123.2V162" stroke="#e8e8e8" stroke-width="1.3" fill="none"/><rect x="2113.3" y="158.6" width="6.4" height="5.2" fill="#4a7a6a" stroke="#56d26e" stroke-width="1.1"/><circle cx="2116.5" cy="169.8" r="3.3" fill="#4a7a6a" stroke="#56d26e" stroke-width="1.1"/>
<path transform="translate(2122 165.5) scale(1.0)" d="M0 0V11.5L2.8 9L5 13.6L7 12.6L4.8 8.2H8.4Z" fill="#fff" stroke="#3b4453" stroke-width="0.5"/>
<path d="M2174.5 94V107.2M2215.6 94V107.2M2180 100.5H2210" stroke="#d9d9d9" stroke-width="1.3"/><path d="M2175.3 100.5L2181.6 97V104ZM2214.8 100.5L2208.5 97V104Z" fill="#d9d9d9"/>
<rect x="2174" y="109.3" width="42.1" height="8.7" fill="#fcd374"/>
<rect x="2177.7" y="109.3" width="1" height="3" fill="#8a7340"/>
<rect x="2181.9" y="109.3" width="1" height="4.6" fill="#8a7340"/>
<rect x="2186.1" y="109.3" width="1" height="3" fill="#8a7340"/>
<rect x="2190.3" y="109.3" width="1" height="4.6" fill="#8a7340"/>
<rect x="2194.6" y="109.3" width="1" height="3" fill="#8a7340"/>
<rect x="2198.8" y="109.3" width="1" height="4.6" fill="#8a7340"/>
<rect x="2203.0" y="109.3" width="1" height="3" fill="#8a7340"/>
<rect x="2207.2" y="109.3" width="1" height="4.6" fill="#8a7340"/>
<rect x="2211.4" y="109.3" width="1" height="3" fill="#8a7340"/>
<path d="M2190.8 164.9h8l-4.0 4.6z" fill="#d9d9d9"/>
<path d="M2261 90L2268 83.4L2266 88.5L2269 88.2L2261.5 95.5L2263.5 90Z" fill="#fcd374"/>
<path transform="translate(2253 90.6) scale(1.05)" d="M0 0V11.5L2.8 9L5 13.6L7 12.6L4.8 8.2H8.4Z" fill="#fff" stroke="#3b4453" stroke-width="0.5"/>
<rect x="2263.3" y="93.2" width="13.8" height="13.8" fill="#f1f1f1"/><path d="M2269 97H2275M2269 100.3H2275M2269 103.6H2275" stroke="#1a7ae0" stroke-width="1"/><rect x="2265.4" y="96.1" width="1.8" height="1.8" fill="#1a7ae0"/><rect x="2265.4" y="99.4" width="1.8" height="1.8" fill="#1a7ae0"/><rect x="2265.4" y="102.7" width="1.8" height="1.8" fill="#1a7ae0"/>
<rect x="2253.7" y="119.6" width="21.2" height="21.2" fill="none" stroke="#56d26e" stroke-width="1.1" stroke-dasharray="2.4 1.4"/><path d="M2256.2 126.5H2260V122H2272V134H2267.5V138H2256.2Z" fill="#7ad39a"/><path d="M2260 126.5V134H2267.5" stroke="#3b4453" stroke-width="0.8" fill="none"/>
<path transform="translate(2267.4 130) scale(1.0)" d="M0 0V11.5L2.8 9L5 13.6L7 12.6L4.8 8.2H8.4Z" fill="#fff" stroke="#3b4453" stroke-width="0.5"/>
<rect x="2256.1" y="155.1" width="16.9" height="24" fill="#dcdcdc"/><rect x="2259" y="157.8" width="11" height="4.6" fill="#666"/>
<rect x="2259.2" y="165.4" width="2.6" height="2.6" fill="#666"/>
<rect x="2259.2" y="169.4" width="2.6" height="2.6" fill="#666"/>
<rect x="2259.2" y="173.4" width="2.6" height="2.6" fill="#666"/>
<rect x="2263.1" y="165.4" width="2.6" height="2.6" fill="#666"/>
<rect x="2263.1" y="169.4" width="2.6" height="2.6" fill="#666"/>
<rect x="2263.1" y="173.4" width="2.6" height="2.6" fill="#666"/>
<rect x="2267.0" y="165.4" width="2.6" height="2.6" fill="#666"/>
<rect x="2267.0" y="169.4" width="2.6" height="2.6" fill="#666"/>
<rect x="2267.0" y="173.4" width="2.6" height="2.6" fill="#666"/>
<rect x="2308.8" y="86.9" width="33.4" height="37.2" fill="#dfb078"/><path d="M2316.8 88.2Q2317 85 2320.5 84.8V82H2329.5V84.8Q2333 85 2333.2 88.2Z" fill="#fff"/>
<path d="M2320.1 97H2339L2347.1 105.2V130H2320.1Z" fill="#dcdcdc" stroke="#3b4453" stroke-width="0.9"/><path d="M2339 97V105.2H2347.1Z" fill="#f4f4f4"/>
<path d="M2322.6 164.7h8l-4.0 4.6z" fill="#d9d9d9"/>
<rect x="2372.9" y="83" width="18" height="20.8" fill="#d6d6d6"/><path d="M2376 87.4H2388M2376 93.3H2383M2376 99.2H2384" stroke="#888" stroke-width="0.9"/>
<path d="M2383.3 90L2392 102.5M2396.8 92L2388 102.5" stroke="#e8e8e8" stroke-width="1.8"/><circle cx="2387" cy="104.3" r="2.3" stroke="#e8e8e8" stroke-width="1.3" fill="none"/><circle cx="2394" cy="104.3" r="2.3" stroke="#e8e8e8" stroke-width="1.3" fill="none"/>
<path d="M2375.8 118.6H2384L2387 121.6V139H2375.8Z" fill="#ececec"/><path d="M2379.8 122.6H2389.5L2395.2 128.3V143.1H2379.8Z" fill="#dcdcdc" stroke="#3b4453" stroke-width="0.8"/><path d="M2389.5 122.6V128.3H2395.2Z" fill="#f6f6f6"/>
<path d="M2403.6 91.9h8l-4.0 4.6z" fill="#d9d9d9"/>
<path d="M2403.6 127.8h8l-4.0 4.6z" fill="#d9d9d9"/>
<path d="M2446.9 86.9H2468V101.9H2495.1V123H2446.9Z" fill="#dcdcdc"/>
<path d="M2466.7 163.9h8l-4.0 4.6z" fill="#d9d9d9"/>
</svg>
<span class="t" style="left:1016.9px;top:139.5px;font-size:18px;color:#f5f5f5;letter-spacing:-1.332px;">Layer</span>
<span class="t" style="left:997.1px;top:164.8px;font-size:18px;color:#f5f5f5;letter-spacing:-0.427px;">Properties</span>
<span class="t" style="left:1203.5px;top:85.7px;font-size:18px;color:#f5f5f5;letter-spacing:-0.144px;">cobertura</span>
<span class="t" style="left:1262.8px;top:122.8px;font-size:18px;color:#f5f5f5;letter-spacing:-0.377px;">Make Current</span>
<span class="t" style="left:1262.8px;top:158.8px;font-size:18px;color:#f5f5f5;letter-spacing:-0.545px;">Match Layer</span>
<span class="t" style="left:1409.1px;top:137.6px;font-size:18px;color:#f5f5f5;letter-spacing:-0.444px;">Insert</span>
<span class="t" style="left:1496.4px;top:86.6px;font-size:18px;color:#f5f5f5;letter-spacing:-0.866px;">Create</span>
<span class="t" style="left:1497.0px;top:122.9px;font-size:18px;color:#f5f5f5;letter-spacing:-0.707px;">Edit</span>
<span class="t" style="left:1497.0px;top:158.6px;font-size:18px;color:#f5f5f5;letter-spacing:0.024px;">Edit Attributes</span>
<span class="t" style="left:1664.7px;top:140.4px;font-size:18px;color:#f5f5f5;letter-spacing:-0.280px;">Match</span>
<span class="t" style="left:1648.8px;top:165.4px;font-size:18px;color:#f5f5f5;letter-spacing:-0.394px;">Properties</span>
<span class="t" style="left:1803.3px;top:86.6px;font-size:18px;color:#f5f5f5;letter-spacing:-0.311px;">205,105,40</span>
<span class="t" style="left:1872.5px;top:122.9px;font-size:18px;color:#f5f5f5;letter-spacing:-1.156px;">ByLayer</span>
<span class="t" style="left:1872.5px;top:159.2px;font-size:18px;color:#f5f5f5;letter-spacing:-1.156px;">ByLayer</span>
<span class="t" style="left:2046.3px;top:139.7px;font-size:18px;color:#f5f5f5;letter-spacing:-0.208px;">Group</span>
<span class="t" style="left:2161.8px;top:139.7px;font-size:18px;color:#f5f5f5;letter-spacing:-0.656px;">Measure</span>
<span class="t" style="left:2308.0px;top:139.7px;font-size:18px;color:#f5f5f5;letter-spacing:-1.508px;">Paste</span>
<span class="t" style="left:2453.7px;top:139.2px;font-size:18px;color:#f5f5f5;letter-spacing:-1.976px;">Base</span>
<span class="t" style="left:40.6px;top:275.2px;font-size:18px;color:#e9eaec;">[</span>
<div class="b" style="left:45.9px;top:280.6px;width:10.2px;height:1.7px;background:#e9eaec;"></div>
<span class="t" style="left:57.4px;top:275.2px;font-size:18px;color:#e9eaec;letter-spacing:0.028px;">][Custom View][2D Wireframe]</span>
<span class="t" style="left:7.7px;top:951.5px;font-size:18px;color:#e4e6e9;transform-origin:0 0;transform:rotate(-90deg);letter-spacing:-0.310px;">Layer Properties Manager</span>
<svg class="ov" width="2560" height="1539" viewBox="0 0 2560 1539">
<g stroke-linecap="round">
<line x1="683.7" y1="651.4" x2="1389.4" y2="385.6" stroke="#ee4509" stroke-width="1.15"/>
<line x1="1389.4" y1="385.6" x2="1708.0" y2="685.4" stroke="#ee4509" stroke-width="1.15"/>
<line x1="1708.0" y1="685.4" x2="1002.6" y2="950.7" stroke="#ee4509" stroke-width="1.15"/>
<line x1="1002.6" y1="950.7" x2="683.7" y2="651.4" stroke="#ee4509" stroke-width="1.15"/>
<line x1="683.7" y1="670.5" x2="1389.4" y2="404.7" stroke="#ee4509" stroke-width="1.15"/>
<line x1="1389.4" y1="404.7" x2="1708.0" y2="704.5" stroke="#ee4509" stroke-width="1.15"/>
<line x1="1708.0" y1="704.5" x2="1002.6" y2="969.8" stroke="#ee4509" stroke-width="1.15"/>
<line x1="1002.6" y1="969.8" x2="683.7" y2="670.5" stroke="#ee4509" stroke-width="1.15"/>
<line x1="683.7" y1="651.4" x2="683.7" y2="670.5" stroke="#ee4509" stroke-width="1.15"/>
<line x1="1389.4" y1="385.6" x2="1389.4" y2="404.7" stroke="#ee4509" stroke-width="1.15"/>
<line x1="1708.0" y1="685.4" x2="1708.0" y2="704.5" stroke="#ee4509" stroke-width="1.15"/>
<line x1="1002.6" y1="950.7" x2="1002.6" y2="969.8" stroke="#ee4509" stroke-width="1.15"/>
<line x1="716.1" y1="655.3" x2="1382.0" y2="405.3" stroke="#ee4509" stroke-width="1.15"/>
<line x1="718.2" y1="657.2" x2="1383.4" y2="406.9" stroke="#ee4509" stroke-width="1.15"/>
<line x1="1383.4" y1="406.9" x2="1675.0" y2="681.0" stroke="#ee4509" stroke-width="1.15"/>
<line x1="1675.0" y1="681.0" x2="1010.4" y2="931.3" stroke="#ee4509" stroke-width="1.15"/>
<line x1="1010.4" y1="931.3" x2="718.2" y2="657.2" stroke="#ee4509" stroke-width="1.15"/>
<line x1="716.1" y1="655.3" x2="1095.2" y2="578.6" stroke="#ee4509" stroke-width="1.15"/>
<line x1="1010.4" y1="931.3" x2="1095.2" y2="578.6" stroke="#ee4509" stroke-width="1.15"/>
<line x1="1382.0" y1="405.3" x2="1296.8" y2="502.9" stroke="#ee4509" stroke-width="1.15"/>
<line x1="1675.0" y1="681.0" x2="1296.8" y2="502.9" stroke="#ee4509" stroke-width="1.15"/>
<line x1="1095.2" y1="578.6" x2="1296.8" y2="502.9" stroke="#ee4509" stroke-width="1.15"/>
<line x1="683.7" y1="651.4" x2="683.7" y2="670.5" stroke="#b03c14" stroke-width="2"/>
<line x1="1708.0" y1="685.4" x2="1708.0" y2="704.5" stroke="#c8400f" stroke-width="1.6"/>
<line x1="1285.4" y1="682.1" x2="1285.4" y2="797.7" stroke="#7a78dc" stroke-width="1.2"/>
<line x1="1245.0" y1="774.6" x2="1366.9" y2="729.5" stroke="#6fe06a" stroke-width="1.2"/>
<line x1="1260.2" y1="735.1" x2="1336.9" y2="807.7" stroke="#de7b78" stroke-width="1.2"/>
<rect x="1281.4" y="755.4" width="8.2" height="8.2" fill="#212830" stroke="#f2f2f2" stroke-width="1.2"/>
</g>
<g stroke="#e8e8e8" stroke-width="1.1" fill="none" stroke-linecap="round">
<path d="M68.2 1377.7V1318.1M68.2 1377.7L131.7 1354.4M68.2 1377.7L108.9 1416.1"/>
<path d="M59.1 1377.7L69.5 1373.3L77.2 1379L66.9 1384.7Z"/>
<path d="M72.8 1298.9H91.8L72.8 1316.8H92"/>
<path d="M132.8 1331.7L142.4 1341.5L152.1 1331.7M142.4 1341.5V1349.8"/>
<path d="M113.4 1396.5L132 1414.6M132 1396.5L113.4 1414.6"/>
</g>
<g fill="#e6e6e6">
<rect x="2474" y="288" width="16" height="4"/>
<path d="M2503.5 283h11.5v10.5h-11.5zM2506.5 286v4.5h5.5v-4.5z" fill-rule="evenodd"/>
<path d="M2507.5 279h11.5v10.5h-3v-7.5h-8.5z"/>
<path d="M2534.5 279.2h4l2.4 3.6 2.4-3.6h4l-4.4 6 4.4 6h-4l-2.4-3.6-2.4 3.6h-4l4.4-6z"/>
</g>
<defs><radialGradient id="cshadow" cx="50%" cy="50%" r="50%"><stop offset="0" stop-color="#3d4552" stop-opacity="0.9"/><stop offset="0.7" stop-color="#333b47" stop-opacity="0.6"/><stop offset="1" stop-color="#212830" stop-opacity="0"/></radialGradient><linearGradient id="cf" x1="0" y1="0" x2="0.3" y2="1"><stop offset="0" stop-color="#a3a7ac"/><stop offset="1" stop-color="#b3b6ba"/></linearGradient><linearGradient id="cr" x1="0" y1="0" x2="0.2" y2="1"><stop offset="0" stop-color="#9a9da3"/><stop offset="1" stop-color="#b0b3b7"/></linearGradient></defs>
<path d="M2438.4 399.6a95 63 0 1 0 0.01 0zM2438.4 418.6a74.5 44 0 1 1 -0.01 0z" fill="#434b57" fill-rule="evenodd"/>
<ellipse cx="2432" cy="470" rx="54" ry="32" fill="url(#cshadow)"/>
<path d="M2387.6 385.2L2448.6 365.4L2490 399.6L2425.8 421.5Z" fill="#aaaeb3"/>
<path d="M2387.6 385.2L2425.8 421.5L2426.5 481.9L2391 443.4Z" fill="url(#cf)"/>
<path d="M2425.8 421.5L2490 399.6L2486 457.7L2426.5 481.9Z" fill="url(#cr)"/>
<path d="M2387.6 385.2L2425.8 421.5L2490 399.6M2425.8 421.5L2426.5 481.9" stroke="#5a626e" stroke-width="0.9" fill="none" stroke-dasharray="9 4"/>
<path d="M2417.5 418L2425 409.5L2438.2 418.5L2438.5 430L2426 433Z" fill="#9fa8ba" opacity="0.75"/>
<text transform="matrix(0.3820 0.3630 -0.6100 0.1980 2426.38 385.35)" font-family="Liberation Sans" font-weight="bold" font-size="20" fill="#565f6d" stroke="#565f6d" stroke-width="0.9">TOP</text>
<text transform="matrix(0.3820 0.3630 0.0340 0.5820 2394.89 425.87)" font-family="Liberation Sans" font-weight="bold" font-size="20" fill="#565f6d" stroke="#565f6d" stroke-width="0.35">FRONT</text>
<text transform="matrix(0.6420 -0.2190 0.0070 0.6040 2437.28 452.12)" font-family="Liberation Sans" font-weight="bold" font-size="20.5" fill="#565f6d" stroke="#565f6d" stroke-width="0.9">RIGHT</text>
<text transform="matrix(0.3820 0.3630 -0.6100 0.1980 2490.94 423.27)" font-family="Liberation Sans" font-weight="bold" font-size="42" fill="#a7abb0" stroke="#a7abb0" stroke-width="1.0">N</text>
<text transform="matrix(0.3820 0.3630 -0.6100 0.1980 2339.42 484.09)" font-family="Liberation Sans" font-weight="bold" font-size="52" fill="#a7abb0" stroke="#a7abb0" stroke-width="1.0">S</text>
<text transform="matrix(0.3820 0.3630 -0.6100 0.1980 2471.48 506.24)" font-family="Liberation Sans" font-weight="bold" font-size="55" fill="#a7abb0" stroke="#a7abb0" stroke-width="1.0">E</text>
<rect x="2383.5" y="408.5" width="6" height="4.5" fill="#a7abb0" transform="rotate(-20 2387 411)"/>
<rect x="2404.2" y="552.9" width="68.4" height="24.5" rx="5" fill="#9d9eae" stroke="#8d8e9f" stroke-width="1.5"/>
<text x="2410" y="571.5" font-family="Liberation Sans" font-size="18" fill="#636a78" textLength="35" lengthAdjust="spacingAndGlyphs">WCS</text>
<path d="M2454 561.5h11l-5.5 6z" fill="#b9bac8" stroke="#7f8292" stroke-width="1"/>
<rect x="2512.4" y="611.5" width="46" height="310.7" rx="4" fill="#4a525e" stroke="#565e6a" stroke-width="1"/>
<g stroke="#6a7280" fill="none" stroke-width="2">
<circle cx="2550.5" cy="619.5" r="4" stroke-width="1.2"/><path d="M2548 617l5 5m0-5l-5 5" stroke-width="1.2"/>
<circle cx="2550.5" cy="913" r="4" stroke-width="1.2"/><path d="M2547.5 913h6" stroke-width="1.2"/>
<circle cx="2535.5" cy="653" r="15"/><circle cx="2535.5" cy="653" r="9"/><path d="M2526 664l-5 5M2545 664l5 5" stroke-width="3"/>
<path d="M2524 738c-3-8-6-14-3-16s6 4 7 7l-1-18c0-4 5-4 5 0l1 12 0-16c0-4 5-4 5 0l1 16 1-13c0-4 5-4 5 0l0 16c2-5 7-5 6-1-1 6-4 10-6 16z"/>
<path d="M2519 743l26 24M2545 743l-26 24M2519 743v7M2519 743h7M2545 743h-7M2545 743v7M2519 767h7M2519 767v-7"/><circle cx="2543" cy="765" r="6"/><path d="M2548 770l6 6" stroke-width="3"/>
<path d="M2535 800l6 8h-4v22h-4v-22h-4z"/><ellipse cx="2535" cy="819" rx="15" ry="6"/><path d="M2531 829l-5-5 6-2"/>
<rect x="2518" y="864.5" width="8" height="6"/><rect x="2530" y="864.5" width="8" height="6"/><rect x="2542" y="864.5" width="8" height="6"/><rect x="2518.5" y="876" width="24" height="18"/><path d="M2526 879l11 6-11 6z" fill="#6a7280"/>
</g>
<g fill="#6a7280"><path d="M2532 680h7l-3.5 4z"/><path d="M2532 786h7l-3.5 4z"/><path d="M2532 843h7l-3.5 4z"/></g>
<path d="M2515 693h41M2515 855h41" stroke="#555d69" stroke-width="1"/>
</svg>
<svg class="ov" width="2560" height="1539" viewBox="0 0 2560 1539">
<path d="M82.9 258.9L98.5 223.1H275.5L261.3 258.9Z" fill="#3b4453"/>
<path d="M12.4 252.4L22.8 229M323.5 252.4L333.9 229" stroke="#475467" stroke-width="1.6"/>
<path d="M246 236L256.2 246.4M256.2 236L246 246.4" stroke="#a4a9b0" stroke-width="2.6"/>
<path d="M289 241.2H307.2M298.1 232.2V250.3" stroke="#ececec" stroke-width="3"/>
<path d="M11.7 1481.4L25.9 1445.7H116.1L101.1 1481.4Z" fill="#3b4453"/>
<path d="M159.4 1475.5L169.8 1452.3M219.5 1475.5L229.9 1452.3" stroke="#475467" stroke-width="1.6"/>
<path d="M184.8 1464H203M193.9 1455V1473.2" stroke="#ececec" stroke-width="3"/>
<path d="M579.6 1259.5H612.4V1438.4H575.6V1263.5Q575.6 1259.5 579.6 1259.5Z" fill="#282f3b"/>
<path d="M581 1267.6H607" stroke="#c8c8c8" stroke-width="1.6" stroke-dasharray="1.6 2.8"/>
<path d="M587 1288.4L599.2 1300.6M599.2 1288.4L587 1300.6" stroke="#dcdcdc" stroke-width="2.6"/>
<path d="M584 1339.5L596 1327.5" stroke="#d4d4d4" stroke-width="3.6" stroke-linecap="round"/><path d="M603.8 1324.5A6 6 0 1 1 598.3 1319.2L598.8 1323.8L601 1325.6Z" fill="#d4d4d4"/>
<rect x="612" y="1260" width="1410" height="147.2" fill="#999a9c"/>
<rect x="612.4" y="1407.2" width="1409.5" height="2.2" fill="#1f242b"/>
<rect x="612.4" y="1409.4" width="1409.5" height="28.4" fill="#c0c1c3"/>
<rect x="619.5" y="1416.5" width="23" height="17" fill="#c8c8c8" stroke="#555" stroke-width="1"/><rect x="619.5" y="1416.5" width="23" height="4" fill="#555"/><path d="M622 1424L626 1426.5L622 1429M627 1430H632" stroke="#555" stroke-width="1" fill="none"/>
<path d="M647.0 1421.5h10l-5.0 5.5z" fill="#444"/>
<path d="M2005.7 1426.5H2014.7L2010.2 1421.3Z" fill="#444"/>
<rect x="1648.6" y="1490.5" width="911.4" height="37.300000000000004" fill="#222933"/>
<rect x="1655.8" y="1492.0" width="72.2" height="35.6" fill="#3b4453"/>
<rect x="1734.1" y="1492.0" width="95.9" height="35.6" fill="#3b4453"/>
<rect x="1836" y="1492.0" width="36.0" height="35.6" fill="#3b4453"/>
<rect x="1874.2" y="1492.0" width="155.8" height="35.6" fill="#3b4453"/>
<rect x="2033" y="1492.0" width="94.4" height="35.6" fill="#3b4453"/>
<rect x="2130.8" y="1492.0" width="34.2" height="35.6" fill="#3b4453"/>
<rect x="2172.7" y="1492.0" width="156.9" height="35.6" fill="#3b4453"/>
<rect x="2336" y="1492.0" width="59.8" height="35.6" fill="#3b4453"/>
<rect x="2398" y="1492.0" width="35.4" height="35.6" fill="#3b4453"/>
<rect x="2440" y="1492.0" width="35.6" height="35.6" fill="#3b4453"/>
<rect x="2480.2" y="1492.0" width="3.5" height="35.6" fill="#3b4453"/>
<rect x="2488" y="1492.0" width="72.0" height="35.6" fill="#3b4453"/>
<rect x="1911.1" y="1493.2" width="33.9" height="33.4" fill="#5e8fc4"/>
<rect x="2033.1" y="1493.2" width="33.9" height="33.4" fill="#5e8fc4"/>
<rect x="2069.2" y="1493.2" width="33.9" height="33.4" fill="#5e8fc4"/>
<rect x="2130.9" y="1493.2" width="34.1" height="33.4" fill="#5e8fc4"/>
<rect x="2172.7" y="1493.2" width="34.3" height="33.4" fill="#5e8fc4"/>
<g stroke="#ececec" stroke-width="1.3" fill="none">
<path d="M1745.3 1498.1V1521M1751.8 1498.1V1521M1758.3 1498.1V1521M1740.2 1503.3H1763M1740.2 1509.4H1763M1740.2 1515.4H1763"/>
<path d="M1880.7 1498.1V1521H1903.7M1880.7 1514.5H1887.2V1521"/>
<circle cx="1925.1" cy="1509.8" r="9.3"/><path d="M1925.1 1509.8H1940M1925.1 1509.8L1936.5 1500.3"/>
<path d="M2038.6 1518.9H2061.6M2038.6 1518.9L2056.1 1501.4"/>
<rect x="2077.3" y="1501.4" width="20.3" height="19.7"/><rect x="2074.2" y="1498.6" width="5.9" height="6.1" fill="#5e8fc4"/>
<path d="M2135.2 1501.4H2143.2M2139.2 1497.4V1505.4"/><path d="M2142.5 1507V1503.8H2156.8V1517"/>
<path d="M1842.4 1507H1852.4M1847.4 1502V1512"/>
<rect x="2446.5" y="1499.2" width="8.8" height="7.7"/><circle cx="2464.7" cy="1508.4" r="4.8"/><path d="M2450.9 1521.1H2460.7L2455.8 1513Z"/>
<rect x="2494.2" y="1501.4" width="23.8" height="16.4"/><path d="M2508 1509L2514.6 1504.2M2504.2 1510.2L2497.6 1515"/>
</g>
<path d="M2514.9 1503.9H2510.5M2514.9 1503.9V1508M2497.3 1515.3H2501.7M2497.3 1515.3V1511.2" stroke="#ececec" stroke-width="1.4"/>
<rect x="2045" y="1508.9" width="3.6" height="3.6" fill="#ececec"/>
<rect x="2145.1" y="1506.9" width="14.9" height="14.8" fill="#fff"/>
<rect x="1851.1" y="1513.2" width="14.9" height="5.6" fill="#ececec"/><rect x="1852.3" y="1514.4" width="2.2" height="3.2" fill="#3b4453"/>
<rect x="1778.5" y="1500.8" width="3.2" height="3.2" fill="#ececec"/>
<rect x="1778.5" y="1507.8" width="3.2" height="3.2" fill="#ececec"/>
<rect x="1778.5" y="1514.7" width="3.2" height="3.2" fill="#ececec"/>
<rect x="1785.6" y="1500.8" width="3.2" height="3.2" fill="#ececec"/>
<rect x="1785.6" y="1507.8" width="3.2" height="3.2" fill="#ececec"/>
<rect x="1785.6" y="1514.7" width="3.2" height="3.2" fill="#ececec"/>
<rect x="1793.0" y="1500.8" width="3.2" height="3.2" fill="#ececec"/>
<rect x="1793.0" y="1507.8" width="3.2" height="3.2" fill="#ececec"/>
<rect x="1793.0" y="1514.7" width="3.2" height="3.2" fill="#ececec"/>
<path d="M1988 1498.1V1519.7" stroke="#5fd66a" stroke-width="1.3"/><path d="M1979.1 1500.1L1996.8 1517.8" stroke="#e0605c" stroke-width="1.3"/><rect x="1986.3" y="1507.2" width="3.4" height="3.4" fill="#3b4453" stroke="#ececec" stroke-width="1"/>
<path d="M2189.5 1498.6L2193.1 1509.4L2192.5 1512.2L2200.8 1521.7L2192.1 1518.2L2189.5 1521.2L2186.9 1518.2L2178.2 1521.7L2186.5 1512.2L2185.9 1509.4Z" fill="#fff"/>
<path d="M2225 1498.6L2228.6 1509.4L2228 1512.2L2236.3 1521.7L2227.6 1518.2L2225 1521.2L2222.4 1518.2L2213.7 1521.7L2222 1512.2L2221.4 1509.4Z" fill="#ececec"/>
<path d="M2261.6 1498.6L2265.2 1509.4L2264.6 1512.2L2272.9 1521.7L2264.2 1518.2L2261.6 1521.2L2259.0 1518.2L2250.2999999999997 1521.7L2258.6 1512.2L2258.0 1509.4Z" fill="#ececec"/>
<circle cx="2198.3" cy="1503.6" r="3.2" stroke="#fff" stroke-width="1.2" fill="none"/>
<path d="M2234.5 1499L2230.5 1505H2233.5L2231.5 1510L2237 1503.5H2234L2236.5 1499Z" fill="#ececec"/>
<path d="M2365.71 1506.88L2365.71 1512.12L2362.14 1512.85L2362.12 1512.89L2364.13 1515.93L2360.43 1519.63L2357.39 1517.62L2357.35 1517.64L2356.62 1521.21L2351.38 1521.21L2350.65 1517.64L2350.61 1517.62L2347.57 1519.63L2343.87 1515.93L2345.88 1512.89L2345.86 1512.85L2342.29 1512.12L2342.29 1506.88L2345.86 1506.15L2345.88 1506.11L2343.87 1503.07L2347.57 1499.37L2350.61 1501.38L2350.65 1501.36L2351.38 1497.79L2356.62 1497.79L2357.35 1501.36L2357.39 1501.38L2360.43 1499.37L2364.13 1503.07L2362.12 1506.11L2362.14 1506.15ZM2358.2 1509.5A4.2 4.2 0 1 0 2349.8 1509.5A4.2 4.2 0 1 0 2358.2 1509.5Z" fill="#d9d9d9" fill-rule="evenodd"/>
<path d="M2404.5 1509.5H2426.5M2415.5 1498.5V1520.5" stroke="#ececec" stroke-width="3"/>
<rect x="2530.3" y="1499.9" width="24.5" height="3" fill="#ececec"/>
<rect x="2530.3" y="1508.1" width="24.5" height="3" fill="#ececec"/>
<rect x="2530.3" y="1516.3" width="24.5" height="3" fill="#ececec"/>
<path d="M1812.7 1506.8h10.5l-5.2 5.6z" fill="#d9d9d9"/>
<path d="M1952.5 1506.8h10.5l-5.2 5.6z" fill="#d9d9d9"/>
<path d="M2012.5 1506.8h10.5l-5.2 5.6z" fill="#d9d9d9"/>
<path d="M2110.9 1506.8h10.5l-5.2 5.6z" fill="#d9d9d9"/>
<path d="M2313.3 1506.8h10.5l-5.2 5.6z" fill="#d9d9d9"/>
<path d="M2378.9 1506.8h10.5l-5.2 5.6z" fill="#d9d9d9"/>
</svg>
<span class="t" style="left:36.3px;top:233.0px;font-size:18px;color:#e8e8e8;letter-spacing:-0.629px;">Start</span>
<span class="t" style="left:108.3px;top:233.0px;font-size:18px;color:#f6f6f6;letter-spacing:-0.489px;font-weight:bold;">cubo_paredes*</span>
<span class="t" style="left:36.3px;top:1457.2px;font-size:18px;color:#f6f6f6;letter-spacing:0.400px;font-weight:bold;">Model</span>
<span class="t" style="left:127.0px;top:1458.0px;font-size:17px;color:#e8e8e8;letter-spacing:-0.710px;">a3</span>
<span class="t" style="left:616.3px;top:1269.3px;font-size:18.3px;color:#111111;letter-spacing:-0.003px;font-family:'Liberation Mono',monospace;">Command: *Cancel*</span>
<span class="t" style="left:616.3px;top:1292.4px;font-size:18.3px;color:#111111;letter-spacing:-0.003px;font-family:'Liberation Mono',monospace;">Command: *Cancel*</span>
<span class="t" style="left:616.3px;top:1315.5px;font-size:18.3px;color:#111111;letter-spacing:-0.003px;font-family:'Liberation Mono',monospace;">Command: *Cancel*</span>
<span class="t" style="left:616.3px;top:1338.5px;font-size:18.3px;color:#111111;letter-spacing:0.049px;font-family:'Liberation Mono',monospace;">Command:  Regenerating model.</span>
<span class="t" style="left:616.3px;top:1361.6px;font-size:18.3px;color:#111111;letter-spacing:0.049px;font-family:'Liberation Mono',monospace;">Command:  Regenerating model.</span>
<span class="t" style="left:616.3px;top:1384.7px;font-size:18.3px;color:#111111;letter-spacing:0.049px;font-family:'Liberation Mono',monospace;">Command:  Regenerating model.</span>
<span class="t" style="left:667.9px;top:1415.1px;font-size:18.3px;color:#6e6e6e;letter-spacing:-0.078px;font-style:italic;font-family:'Liberation Mono',monospace;">Type a command</span>
<span class="t" style="left:1662.4px;top:1501.1px;font-size:18px;color:#f4f4f4;letter-spacing:-0.878px;">MODEL</span>
<span class="t" style="left:2288.2px;top:1501.9px;font-size:17px;color:#f4f4f4;font-weight:bold;transform-origin:0 0;transform:scaleX(0.70);">1:1</span>
</body></html>
